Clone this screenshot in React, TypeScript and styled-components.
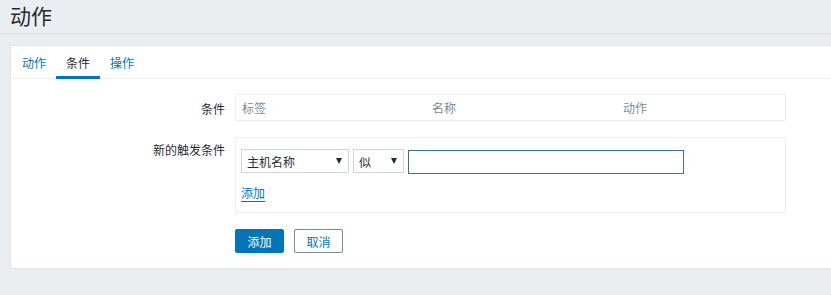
import React from "react";
import styled, { createGlobalStyle } from "styled-components";

const GlobalStyle = createGlobalStyle`
  html, body {
    margin: 0;
    padding: 0;
    background: #ebeef0;
  }
  body {
    font-family: "Liberation Sans", "Noto Sans CJK SC", sans-serif;
    font-size: 12px;
    color: #1f2c33;
  }
`;

const Page = styled.div`
  width: 831px;
  height: 295px;
  overflow: hidden;
  background: #ebeef0;
`;

const Header = styled.div`
  height: 35px;
  padding: 0 10px;
  display: flex;
  align-items: center;
  border-bottom: 2px solid #e3e7ea;
  box-sizing: border-box;
`;

const Title = styled.h1`
  margin: 0;
  margin-top: -4px;
  font-size: 21px;
  font-weight: normal;
  color: #1f2c33;
`;

const Panel = styled.div`
  margin: 10px 0 0 10px;
  background: #ffffff;
  border: 1px solid #dfe4e7;
  border-right: none;
  padding-bottom: 15px;
`;

const TabBar = styled.div`
  display: flex;
  height: 32px;
  padding-left: 1px;
  border-bottom: 1px solid #ebeef0;
`;

const Tab = styled.div<{ $active?: boolean }>`
  padding: 0 10px;
  display: flex;
  align-items: center;
  color: ${(p) => (p.$active ? "#1f2c33" : "#0275b8")};
  border-bottom: 3px solid ${(p) => (p.$active ? "#0275b8" : "transparent")};
  margin-bottom: -1px;
  padding-top: 3px;
`;

const Form = styled.div`
  display: grid;
  grid-template-columns: 214px 551px;
  column-gap: 10px;
  row-gap: 16px;
  padding-top: 15px;
`;

const Label = styled.div<{ $top: number }>`
  text-align: right;
  padding-top: ${(p) => p.$top}px;
  color: #1f2c33;
`;

const Box = styled.div`
  border: 1px solid #ebeef0;
  box-sizing: border-box;
`;

const HeadRow = styled.div`
  display: grid;
  grid-template-columns: 190px 191px 1fr;
  height: 25px;
  align-items: center;
  padding-left: 6px;
  color: #768d99;
`;

const ConditionBox = styled(Box)`
  padding: 11px 5px 10px;
`;

const Inputs = styled.div`
  display: flex;
  gap: 4px;
  align-items: flex-start;
`;

const Select = styled.div<{ $width: number }>`
  width: ${(p) => p.$width}px;
  height: 24px;
  box-sizing: border-box;
  border: 1px solid #cfd6da;
  background: #ffffff;
  display: flex;
  align-items: center;
  justify-content: space-between;
  padding: 0 5px 0 5px;
  color: #1f2c33;
`;

const Arrow = styled.span`
  width: 0;
  height: 0;
  border-left: 3.5px solid transparent;
  border-right: 3.5px solid transparent;
  border-top: 6px solid #1f2c33;
  margin-right: 1px;
`;

const TextInput = styled.div`
  width: 276px;
  height: 24px;
  margin-top: 1px;
  box-sizing: border-box;
  border: 1px solid #3b709a;
  background: #ffffff;
`;

const AddLink = styled.span`
  display: inline-block;
  margin-top: 13px;
  color: #0275b8;
  border-bottom: 1px solid #0275b8;
  line-height: 14px;
`;

const Buttons = styled.div`
  grid-column: 2;
  display: flex;
  gap: 10px;
`;

const Button = styled.div<{ $primary?: boolean }>`
  width: 49px;
  height: 24px;
  box-sizing: border-box;
  display: flex;
  align-items: center;
  justify-content: center;
  border-radius: 2px;
  background: ${(p) => (p.$primary ? "#0275b8" : "#ffffff")};
  color: ${(p) => (p.$primary ? "#ffffff" : "#0275b8")};
  border: 1px solid ${(p) => (p.$primary ? "#0275b8" : "#768d99")};
`;

export default function App() {
  return (
    <Page>
      <GlobalStyle />
      <Header>
        <Title>动作</Title>
      </Header>
      <Panel>
        <TabBar>
          <Tab>动作</Tab>
          <Tab $active>条件</Tab>
          <Tab>操作</Tab>
        </TabBar>
        <Form>
          <Label $top={6}>条件</Label>
          <Box>
            <HeadRow>
              <span>标签</span>
              <span>名称</span>
              <span>动作</span>
            </HeadRow>
          </Box>
          <Label $top={4}>新的触发条件</Label>
          <ConditionBox>
            <Inputs>
              <Select $width={108}>
                主机名称
                <Arrow />
              </Select>
              <Select $width={51}>
                似
                <Arrow />
              </Select>
              <TextInput />
            </Inputs>
            <AddLink>添加</AddLink>
          </ConditionBox>
          <Buttons>
            <Button $primary>添加</Button>
            <Button>取消</Button>
          </Buttons>
        </Form>
      </Panel>
    </Page>
  );
}
